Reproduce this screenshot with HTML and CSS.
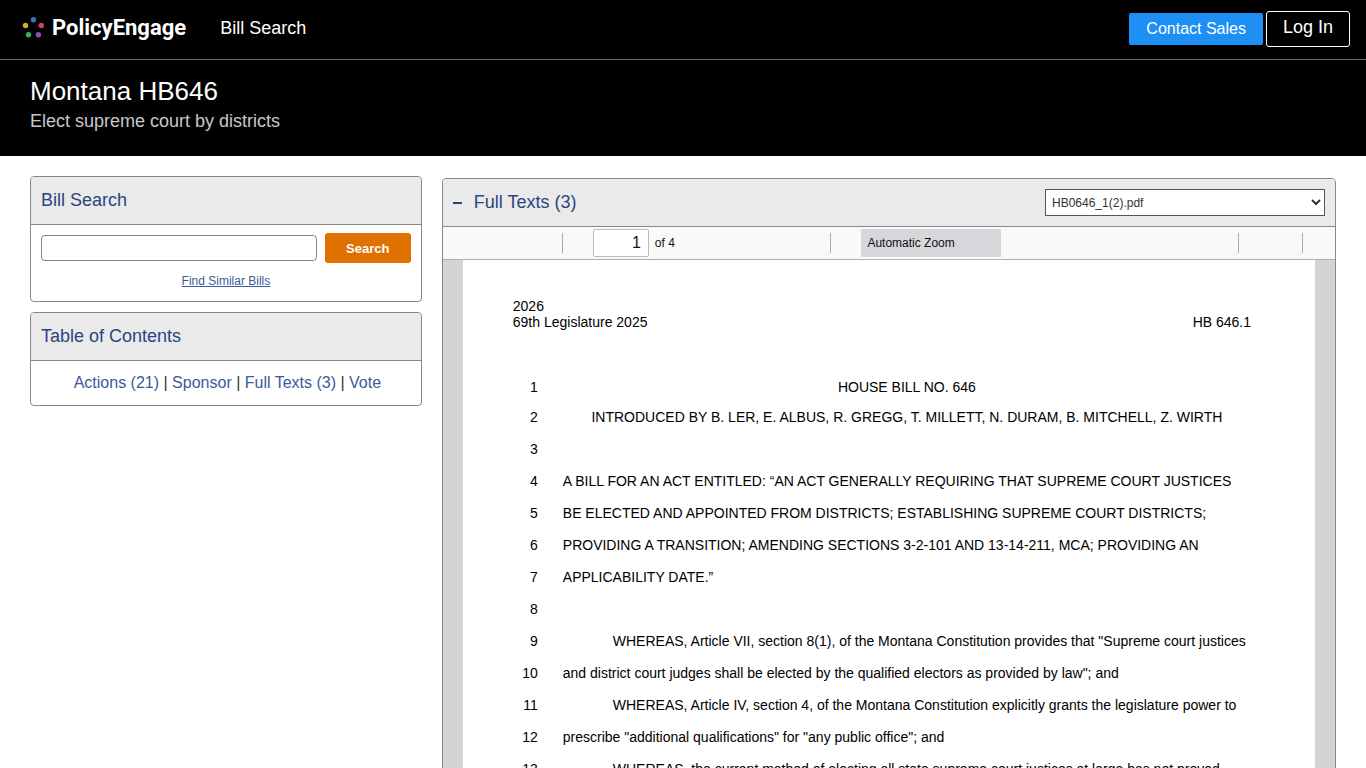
FILE: index.html
```html
<!DOCTYPE html>
<html lang="en">
<head>
<meta charset="utf-8">
<meta name="viewport" content="width=device-width, initial-scale=1">
<title>Montana HB646 - PolicyEngage</title>
<link rel="stylesheet" href="styles.css">
</head>
<body>
<header class="topbar">
  <a class="brand" href="#">
    <svg class="brand-mark" viewBox="0 0 22 22" aria-hidden="true">
      <circle cx="11.5" cy="2.7" r="2.7" fill="#4a6fb0"/>
      <circle cx="3.5" cy="8.5" r="2.7" fill="#e0a33c"/>
      <circle cx="19.3" cy="8.5" r="2.7" fill="#c9475c"/>
      <circle cx="6.5" cy="17.8" r="2.7" fill="#45a862"/>
      <circle cx="16.4" cy="17.8" r="2.7" fill="#8a52ae"/>
    </svg>
    <span class="brand-name">PolicyEngage</span>
  </a>
  <nav class="topnav"><a href="#">Bill Search</a></nav>
  <div class="account">
    <a class="contact" href="#">Contact Sales</a>
    <a class="login" href="#">Log In</a>
  </div>
</header>

<section class="hero">
  <h1>Montana HB646</h1>
  <p>Elect supreme court by districts</p>
</section>

<main class="columns">
  <aside class="sidebar">
    <section class="panel">
      <h2 class="panel-head">Bill Search</h2>
      <form class="search">
        <div class="search-row">
          <input type="text" aria-label="Search bills">
          <button type="button">Search</button>
        </div>
        <a href="#">Find Similar Bills</a>
      </form>
    </section>
    <section class="panel">
      <h2 class="panel-head">Table of Contents</h2>
      <nav class="toc"><a href="#">Actions (21)</a> | <a href="#">Sponsor</a> | <a href="#texts">Full Texts (3)</a> | <a href="#">Vote</a></nav>
    </section>
  </aside>

  <section class="panel viewer" id="texts">
    <div class="panel-head viewer-head">
      <button class="toggle" type="button" aria-label="Collapse"></button>
      <h2>Full Texts (3)</h2>
      <select aria-label="Document"><option>HB0646_1(2).pdf</option></select>
    </div>
    <div class="toolbar">
      <div class="tools-left">
        <span class="rule"></span>
        <label class="page-field"><input type="text" value="1" aria-label="Page"> of 4</label>
      </div>
      <div class="tools-middle">
        <span class="rule"></span>
        <select aria-label="Zoom"><option>Automatic Zoom</option></select>
      </div>
      <div class="tools-right">
        <span class="rule"></span>
        <span class="rule"></span>
      </div>
    </div>
    <div class="canvas">
      <article class="sheet">
        <header class="sheet-head">
          <p>2026<br>69th Legislature 2025</p>
          <p>HB 646.1</p>
        </header>
        <div class="line first"><span>1</span><p class="center">HOUSE BILL NO. 646</p></div>
        <div class="line"><span>2</span><p class="center">INTRODUCED BY B. LER, E. ALBUS, R. GREGG, T. MILLETT, N. DURAM, B. MITCHELL, Z. WIRTH</p></div>
        <div class="line"><span>3</span><p></p></div>
        <div class="line"><span>4</span><p>A BILL FOR AN ACT ENTITLED: “AN ACT GENERALLY REQUIRING THAT SUPREME COURT JUSTICES</p></div>
        <div class="line"><span>5</span><p>BE ELECTED AND APPOINTED FROM DISTRICTS; ESTABLISHING SUPREME COURT DISTRICTS;</p></div>
        <div class="line"><span>6</span><p>PROVIDING A TRANSITION; AMENDING SECTIONS 3-2-101 AND 13-14-211, MCA; PROVIDING AN</p></div>
        <div class="line"><span>7</span><p>APPLICABILITY DATE.”</p></div>
        <div class="line"><span>8</span><p></p></div>
        <div class="line"><span>9</span><p class="indent">WHEREAS, Article VII, section 8(1), of the Montana Constitution provides that "Supreme court justices</p></div>
        <div class="line"><span>10</span><p>and district court judges shall be elected by the qualified electors as provided by law"; and</p></div>
        <div class="line"><span>11</span><p class="indent">WHEREAS, Article IV, section 4, of the Montana Constitution explicitly grants the legislature power to</p></div>
        <div class="line"><span>12</span><p>prescribe "additional qualifications" for "any public office"; and</p></div>
        <div class="line"><span>13</span><p class="indent">WHEREAS, the current method of electing all state supreme court justices at large has not proved</p></div>
      </article>
    </div>
  </section>
</main>
</body>
</html>
```

FILE: styles.css
```css
* {
  box-sizing: border-box;
}

body {
  display: flex;
  flex-direction: column;
  height: 100vh;
  margin: 0;
  overflow: hidden;
  background: #fff;
  color: #333;
  font: 16px/20px "Liberation Sans", Arial, sans-serif;
}

h1, h2, p {
  margin: 0;
  font-weight: 400;
}

a {
  color: #3a5a9c;
  text-decoration: none;
}

input, select, button {
  font-family: inherit;
}

.topbar {
  display: flex;
  flex: none;
  align-items: center;
  height: 60px;
  padding: 0 16px 4px 22px;
  border-bottom: 1px solid #6b6b6b;
  background: #000;
}

.topbar a {
  color: #fff;
}

.brand {
  display: flex;
  align-items: center;
  gap: 8px;
}

.brand-mark {
  width: 22px;
  height: 22px;
}

.brand-name {
  font: 700 22px/26px Roboto, sans-serif;
}

.topnav {
  flex: 1;
  padding-left: 34px;
  font-size: 18px;
}

.account {
  display: flex;
  align-items: center;
  gap: 3px;
  padding-top: 2px;
}

.contact {
  padding: 6px 17px;
  border-radius: 2px;
  background: #1e90f5;
}

.login {
  padding: 5px 16px 9px;
  border: 1px solid #fff;
  border-radius: 3px;
  font-size: 18px;
}

.hero {
  flex: none;
  padding: 16px 30px 20px;
  background: #000;
  color: #c8c8c8;
  font-size: 18px;
  line-height: 30px;
}

.hero h1 {
  color: #fff;
  font-size: 26px;
}

.columns {
  display: flex;
  flex: 1;
  align-items: flex-start;
  gap: 20px;
  min-height: 0;
  padding: 20px 30px 0;
}

.sidebar {
  display: flex;
  flex: none;
  flex-direction: column;
  gap: 10px;
  width: 30%;
}

.panel {
  border: 1px solid #888;
  border-radius: 4px;
}

.panel-head {
  padding: 13px 10px;
  border-bottom: 1px solid #888;
  border-radius: 3px 3px 0 0;
  background: #eaeaea;
  color: #2a4580;
  font-size: 18px;
  line-height: 21px;
}

.search {
  padding: 8px 10px 12px;
  font-size: 12px;
  line-height: 16px;
  text-align: center;
}

.search-row {
  display: flex;
  align-items: center;
  gap: 8px;
  margin-bottom: 10px;
}

.search-row input {
  flex: 1;
  min-width: 0;
  height: 26px;
  border: 1px solid #888;
  border-radius: 4px;
}

.search-row button {
  width: 86px;
  height: 30px;
  border: 0;
  border-radius: 3px;
  background: #e07000;
  color: #fff;
  font-size: 13px;
  font-weight: 700;
}

.search a {
  text-decoration: underline;
}

.toc {
  padding: 12px 8px 12px 11px;
  text-align: center;
}

.viewer {
  flex: 1;
  min-width: 0;
  margin-top: 2px;
}

.viewer-head {
  display: flex;
  align-items: center;
  gap: 12px;
  padding: 10px;
}

.viewer-head h2 {
  flex: 1;
  font-size: 18px;
}

.toggle {
  width: 9px;
  height: 2px;
  padding: 0;
  border: 0;
  background: #2a4580;
}

.viewer-head select {
  width: 280px;
  height: 27px;
  padding: 0 2px;
  border: 1px solid #555;
  border-radius: 0;
  background: #fff;
  color: #333;
  font-size: 12px;
}

.toolbar {
  display: grid;
  grid-template-columns: 1fr 1fr 1fr;
  align-items: center;
  height: 33px;
  border-bottom: 1px solid #b0b0b0;
  background: #f9f9fa;
  color: #111;
  font-size: 12px;
}

.tools-left, .tools-middle, .tools-right {
  display: flex;
  align-items: center;
  gap: 30px;
}

.tools-left {
  padding-left: 119px;
}

.tools-middle {
  justify-content: center;
  padding-left: 54px;
}

.tools-right {
  justify-content: flex-end;
  gap: 63px;
  padding-right: 32px;
}

.rule {
  width: 1px;
  height: 20px;
  background: #aaa;
}

.page-field {
  display: flex;
  align-items: center;
  gap: 6px;
}

.page-field input {
  width: 56px;
  height: 28px;
  padding: 0 7px;
  border: 1px solid #bbbbbc;
  border-radius: 2px;
  color: #111;
  font-size: 16px;
  text-align: right;
}

.toolbar select {
  width: 140px;
  height: 28px;
  padding: 0 6px;
  border: 0;
  border-radius: 0;
  background: #d7d7db;
  color: #111;
  font-size: 12px;
  appearance: none;
}

.canvas {
  padding: 0 20px;
  background: #d4d4d7;
}

.sheet {
  padding: 38px 64px 40px 50px;
  background: #fff;
  color: #000;
  font-size: 14px;
}

.sheet-head {
  display: flex;
  align-items: flex-end;
  justify-content: space-between;
  margin-bottom: 43px;
  line-height: 16px;
}

.line {
  display: flex;
  gap: 25px;
  line-height: 32px;
}

.first {
  line-height: 28px;
}

.line span {
  flex: none;
  width: 25px;
  text-align: right;
}

.line p {
  flex: 1;
}

.center {
  text-align: center;
}

.line .indent {
  padding-left: 50px;
}
```
